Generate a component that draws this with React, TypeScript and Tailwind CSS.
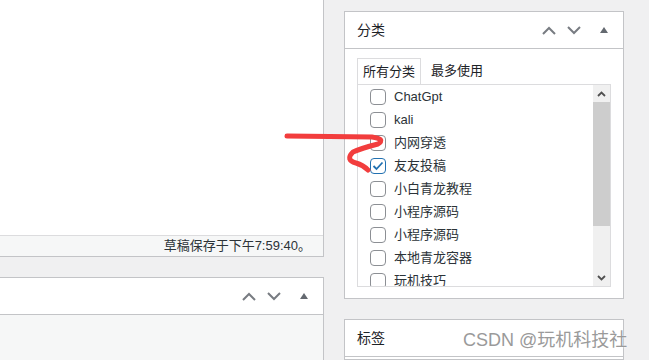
import React from "react";

const font = { fontFamily: '"Liberation Sans", "Noto Sans CJK SC", sans-serif' };

function Up() {
  return (
    <svg width="14" height="9" viewBox="0 0 14 9" className="block">
      <path d="M1 8 L7 2 L13 8" fill="none" stroke="#787c82" strokeWidth="2" />
    </svg>
  );
}
function Down() {
  return (
    <svg width="14" height="9" viewBox="0 0 14 9" className="block">
      <path d="M1 1 L7 7 L13 1" fill="none" stroke="#787c82" strokeWidth="2" />
    </svg>
  );
}
function Tri() {
  return (
    <svg width="8" height="6" viewBox="0 0 8 6" className="block">
      <path d="M0 6 L4 0 L8 6 Z" fill="#646970" />
    </svg>
  );
}

function HeaderIcons() {
  return (
    <div className="flex items-center">
      <Up />
      <div className="w-[11px]" />
      <Down />
      <div className="w-[19px]" />
      <Tri />
      <div className="w-[15px]" />
    </div>
  );
}

const items = [
  { t: "ChatGpt", c: false },
  { t: "kali", c: false },
  { t: "内网穿透", c: false },
  { t: "友友投稿", c: true },
  { t: "小白青龙教程", c: false },
  { t: "小程序源码", c: false },
  { t: "小程序源码", c: false },
  { t: "本地青龙容器", c: false },
  { t: "玩机技巧", c: false },
];

function Box({ checked }: { checked: boolean }) {
  return (
    <div
      className={
        "w-4 h-4 rounded-[4px] border bg-white flex items-center justify-center shrink-0 " +
        (checked ? "border-[#2271b1]" : "border-[#8c8f94]")
      }
    >
      {checked && (
        <svg width="12" height="10" viewBox="0 0 12 10">
          <path d="M1.5 5 L4.5 8 L10.5 1.5" fill="none" stroke="#2271b1" strokeWidth="1.8" />
        </svg>
      )}
    </div>
  );
}

export default function App() {
  return (
    <div className="relative w-[649px] h-[360px] bg-[#f0f0f1] overflow-hidden flex" style={font}>
      {/* left column */}
      <div className="w-[324px] shrink-0 flex flex-col">
        <div className="bg-white border-r border-b border-[#c3c4c7] flex flex-col h-[257px]">
          <div className="flex-1" />
          <div className="h-[21px] border-t border-[#dcdcde] bg-[#f6f7f7] flex items-center justify-end pr-[12px] text-[13px] text-[#2c3338]">
            草稿保存于下午7:59:40。
          </div>
        </div>
        <div className="mt-[20px] flex-1 border-t border-r border-[#c3c4c7] flex flex-col">
          <div className="h-[37px] bg-white border-b border-[#c3c4c7] flex items-center justify-end">
            <HeaderIcons />
          </div>
          <div className="flex-1 bg-[#f6f7f7]" />
        </div>
      </div>

      {/* right column */}
      <div className="ml-[20px] w-[280px] shrink-0 flex flex-col pt-[11px]">
        <div className="bg-white border border-[#c3c4c7]">
          <div className="h-[37px] border-b border-[#c3c4c7] flex items-center justify-between pl-3">
            <span className="text-[14px] text-[#1d2327]">分类</span>
            <HeaderIcons />
          </div>
          <div className="px-3 pt-[9px] pb-[11px]">
            <div className="flex items-end h-[26px] text-[13px] text-[#1d2327]">
              <div className="h-[26px] px-[5px] border-l border-t border-r border-[#dcdcde] flex items-center">
                所有分类
              </div>
              <div className="ml-[10px] h-[26px] flex items-center">最多使用</div>
            </div>
            <div className="h-[203px] border border-[#dcdcde] flex overflow-hidden">
              <div className="flex-1 overflow-hidden pl-3">
                {items.map((it, i) => (
                  <div key={i} className="h-[23px] flex items-center gap-2 text-[13px] text-[#2c3338]">
                    <Box checked={it.c} />
                    <span>{it.t}</span>
                  </div>
                ))}
              </div>
              <div className="w-[17px] bg-[#f0f0f0] flex flex-col">
                <div className="h-[17px] flex items-center justify-center">
                  <svg width="9" height="6" viewBox="0 0 9 6">
                    <path d="M1 5 L4.5 1.5 L8 5" fill="none" stroke="#505050" strokeWidth="1.8" />
                  </svg>
                </div>
                <div className="h-[124px] bg-[#cdcdcd]" />
                <div className="flex-1" />
                <div className="h-[17px] flex items-center justify-center">
                  <svg width="9" height="6" viewBox="0 0 9 6">
                    <path d="M1 1 L4.5 4.5 L8 1" fill="none" stroke="#505050" strokeWidth="1.8" />
                  </svg>
                </div>
              </div>
            </div>
          </div>
        </div>
        <div className="mt-[20px] bg-white border border-[#c3c4c7] flex-1">
          <div className="h-[37px] border-b border-[#c3c4c7] flex items-center pl-3">
            <span className="text-[14px] text-[#1d2327]">标签</span>
          </div>
        </div>
      </div>

      {/* red annotation */}
      <svg className="absolute left-0 top-0 pointer-events-none" width="649" height="360">
        <path
          d="M287 136 L372 137 Q386 139 378 144 Q362 148 353 152 Q345 160 356 163 Q363 165 368 170"
          fill="none"
          stroke="#f23d3d"
          strokeWidth="5"
          strokeLinecap="round"
          strokeLinejoin="round"
        />
      </svg>

      {/* watermark */}
      <div
        className="absolute left-[463px] top-[328px] text-[18px] leading-[24px] text-[#9a9a9a] whitespace-nowrap pointer-events-none"
        style={{ textShadow: "0 0 2px #fff" }}
      >
        CSDN @玩机科技社
      </div>
    </div>
  );
}
